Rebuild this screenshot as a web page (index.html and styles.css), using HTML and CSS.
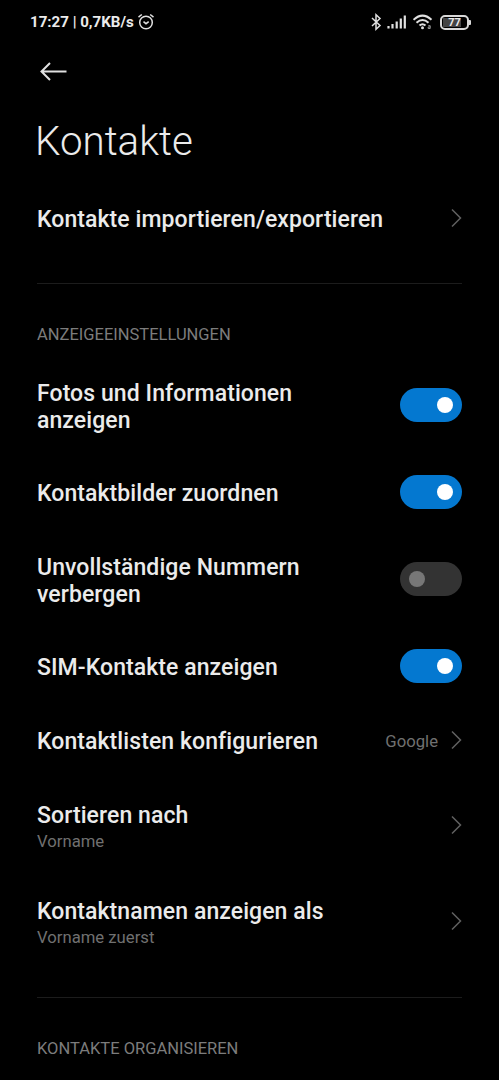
FILE: index.html
```html
<!DOCTYPE html>
<html lang="de">
<head>
    <meta charset="UTF-8">
    <meta name="viewport" content="width=device-width, initial-scale=1.0">
    <title>Kontakte</title>
    <link rel="stylesheet" href="styles.css">
</head>
<body>

<!-- Status bar -->
<div class="status-bar">
    <span class="status-text">17:27 | 0,7KB/s</span>
    <svg class="alarm" width="18" height="18" viewBox="0 0 18 18">
        <circle cx="9" cy="9.5" r="6.3"/>
        <path d="M1.5 4.2L4.8 1.5M16.5 4.2L13.2 1.5M6.5 8.7L9 10.7L11.7 8.6"/>
    </svg>
    <div class="status-icons">
        <svg class="bluetooth" width="12" height="18" viewBox="0 0 12 18">
            <path d="M1 5L9 12.500L5 16.200V1.800L9 5.500L1 13"/>
        </svg>
        <svg class="signal" width="20" height="16" viewBox="0 0 20 16">
            <path d="M1.500 12v2.500M5.500 10v4.500M9.700 7.500v7M13.800 4.500v10M17.800 1.500v13"/>
        </svg>
        <svg class="wifi" width="20" height="18" viewBox="0 0 20 18">
            <path d="M.5 6.800Q9.500-1.500 18.500 6.800M3.500 9.800Q9.500 4.200 15.500 9.800M6.500 12.600Q9.500 9.800 12.500 12.600"/>
            <circle class="dot" cx="9.500" cy="14.800" r="1.500"/>
            <path class="mark" d="M15.300 12.700h1.900v2.800h-2v-1.500h2"/>
        </svg>
        <div class="battery"><span class="battery-level">77</span></div>
    </div>
</div>

<div class="toolbar">
    <svg class="back" width="28" height="20" viewBox="0 0 28 20">
        <path d="M26.500 9.500H1.500M10 1L1.500 9.500L10 18"/>
    </svg>
</div>

<h1>Kontakte</h1>

<div class="settings">
    <div class="row">
        <div class="label">Kontakte importieren/exportieren</div>
        <svg class="chevron" width="12" height="20" viewBox="0 0 12 20"><path d="M2 1.500L10.500 10L2 18.500"/></svg>
    </div>

    <hr>

    <!-- Display settings -->
    <h2>ANZEIGEEINSTELLUNGEN</h2>
    <div class="row row-switch two-lines">
        <div class="label">Fotos und Informationen anzeigen</div>
        <div class="switch on"></div>
    </div>
    <div class="row row-switch">
        <div class="label">Kontaktbilder zuordnen</div>
        <div class="switch on"></div>
    </div>
    <div class="row row-switch two-lines">
        <div class="label">Unvollständige Nummern verbergen</div>
        <div class="switch"></div>
    </div>
    <div class="row row-switch">
        <div class="label">SIM-Kontakte anzeigen</div>
        <div class="switch on"></div>
    </div>
    <div class="row">
        <div class="label">Kontaktlisten konfigurieren</div>
        <span class="value">Google</span>
        <svg class="chevron" width="12" height="20" viewBox="0 0 12 20"><path d="M2 1.500L10.500 10L2 18.500"/></svg>
    </div>
    <div class="row row-summary">
        <div class="label">Sortieren nach<div class="summary">Vorname</div></div>
        <svg class="chevron" width="12" height="20" viewBox="0 0 12 20"><path d="M2 1.500L10.500 10L2 18.500"/></svg>
    </div>
    <div class="row row-summary">
        <div class="label">Kontaktnamen anzeigen als<div class="summary">Vorname zuerst</div></div>
        <svg class="chevron" width="12" height="20" viewBox="0 0 12 20"><path d="M2 1.500L10.500 10L2 18.500"/></svg>
    </div>

    <hr>

    <h2>KONTAKTE ORGANISIEREN</h2>
</div>

</body>
</html>
```
FILE: styles.css
```css
body {
    margin: 0;
    height: 1080px;
    overflow: hidden;
    background-color: #000;
    color: #ebebeb;
    font-family: Roboto, sans-serif;
}
svg {
    display: block;
    flex: none;
    fill: none;
    stroke: #e0e0e0;
    stroke-width: 1.5;
}
.status-bar {
    display: flex;
    align-items: center;
    height: 44px;
    padding: 0 28px 0 30px;
    box-sizing: border-box;
}
.status-text {
    font-size: 15.1px;
    font-weight: 700;
    white-space: nowrap;
}
.alarm {
    margin-left: 3px;
}
.status-icons {
    display: flex;
    align-items: center;
    margin-left: auto;
}
.signal {
    margin: 0 6px 0 4px;
    stroke-width: 2.2;
}
.wifi {
    margin-right: 7px;
    stroke-width: 2;
}
.wifi .dot {
    fill: #e0e0e0;
    stroke: none;
}
.wifi .mark {
    stroke: #999;
    stroke-width: 1;
}
.battery {
    position: relative;
    width: 29px;
    height: 15px;
    padding: 1px;
    box-sizing: border-box;
    border: 2px solid #d8d8d8;
    border-radius: 5px;
    margin-right: 2px;
}
.battery::after {
    content: "";
    position: absolute;
    right: -4px;
    top: 3px;
    width: 2px;
    height: 5px;
    background-color: #d8d8d8;
    border-radius: 0 1px 1px 0;
}
.battery-level {
    display: block;
    height: 9px;
    font-size: 11px;
    font-weight: 700;
    line-height: 10px;
    text-align: center;
    background: linear-gradient(to right, #444 77%, #000 77%);
}
.toolbar {
    height: 56px;
    padding: 18px 0 0 40px;
    box-sizing: border-box;
}
.back {
    stroke-width: 2;
}
h1 {
    margin: 0;
    padding: 18px 35px 0;
    height: 82px;
    box-sizing: border-box;
    font-size: 40.3px;
    font-weight: 300;
    line-height: 48px;
}
.settings {
    padding: 0 37px;
}
.row {
    display: flex;
    align-items: center;
    padding: 23px 0;
}
.row .label {
    margin: 1px 0 -1px;
}
.row-switch {
    padding: 21px 0;
}
.two-lines {
    padding: 22px 0;
}
.row.two-lines .label {
    margin: 2px 0 -2px;
}
.row-summary {
    padding: 22px 0;
}
.row-summary .label {
    margin: 3px 0 -3px;
}
.label {
    flex: 1;
    font-size: 23px;
    font-weight: 500;
    letter-spacing: 0.08px;
    line-height: 27px;
}
.row-switch .label {
    padding-right: 60px;
}
.summary {
    padding: 1px 0;
    font-size: 16.7px;
    font-weight: 400;
    letter-spacing: 0;
    line-height: 23px;
    color: #707070;
}
.value {
    margin: 1px 12px 0 0;
    font-size: 16.7px;
    color: #707070;
}
.chevron {
    margin-top: -1px;
    stroke: #606060;
}
hr {
    height: 1px;
    margin: 28px 0 39px;
    border: none;
    background-color: #1c1c1c;
}
h2 {
    margin: 0 0 9px;
    font-size: 16.5px;
    font-weight: 400;
    line-height: 24px;
    color: #7c7c7c;
}
.switch {
    flex: none;
    width: 62px;
    height: 34px;
    padding: 9px;
    box-sizing: border-box;
    border-radius: 17px;
    background-color: #333;
}
.switch::before {
    content: "";
    display: block;
    width: 16px;
    height: 16px;
    border-radius: 50%;
    background-color: #777;
}
.switch.on {
    background-color: #0478d0;
}
.switch.on::before {
    margin-left: auto;
    background-color: #fff;
}
```
